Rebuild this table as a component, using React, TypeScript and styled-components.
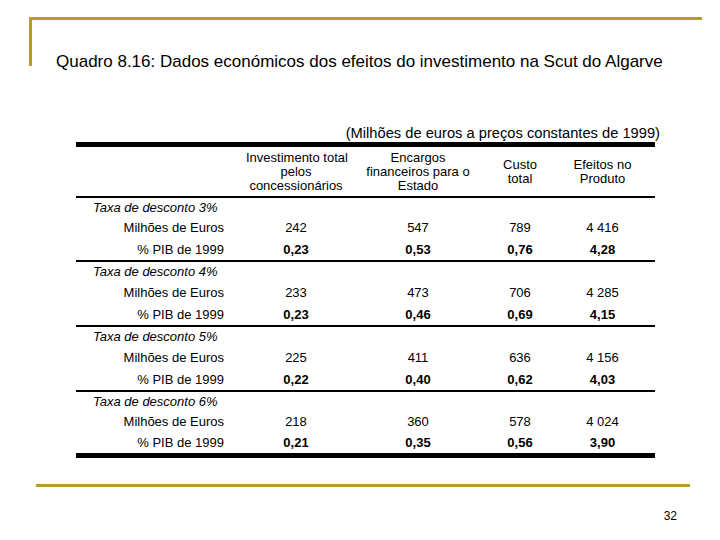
import React from 'react'
import styled, { createGlobalStyle } from 'styled-components'

const GOLD = '#b99a2e'
const COLS = '170px 100px 144px 60px 105px'

const GlobalStyle = createGlobalStyle`
  html, body {
    margin: 0;
    padding: 0;
    background: #fff;
  }
  body {
    font-family: 'Liberation Sans', Arial, sans-serif;
    color: #000;
  }
`

const Page = styled.div`
  width: 720px;
  height: 540px;
  padding-top: 17px;
  box-sizing: border-box;
  overflow: hidden;
`

const Frame = styled.div`
  margin-left: 29px;
  width: 646px;
  height: 14px;
  border-top: 3px solid ${GOLD};
  border-left: 3px solid ${GOLD};
  padding: 32px 0 0 24px;
`

const Title = styled.h1`
  margin: 0;
  font-size: 17px;
  font-weight: normal;
  line-height: 20px;
  white-space: nowrap;
`

const TableBlock = styled.div`
  margin: 59px 0 0 76px;
  width: 579px;
`

const Caption = styled.div`
  text-align: right;
  margin-right: -5px;
  font-size: 14.7px;
  line-height: 17px;
  white-space: nowrap;
`

const Rule = styled.div<{ $thick?: boolean }>`
  height: ${({ $thick }) => ($thick ? 5 : 2)}px;
  background: #000;
`

const Row = styled.div<{ $height: number }>`
  display: grid;
  grid-template-columns: ${COLS};
  height: ${({ $height }) => $height}px;
  align-items: center;
  font-size: 13px;
  line-height: 14px;
`

const HeadCell = styled.div`
  text-align: center;
  white-space: nowrap;
`

const GroupLabel = styled.div`
  grid-column: 1 / span 2;
  padding-left: 17px;
  font-style: italic;
`

const RowLabel = styled.div`
  text-align: right;
  padding-right: 22px;
`

const Value = styled.div<{ $bold?: boolean }>`
  text-align: center;
  font-weight: ${({ $bold }) => ($bold ? 'bold' : 'normal')};
`

const BottomLine = styled.div`
  margin: 26px 0 0 36px;
  width: 654px;
  height: 3px;
  background: ${GOLD};
`

const PageNumber = styled.div`
  margin: 22px 43px 0 0;
  text-align: right;
  font-size: 12px;
  line-height: 14px;
`

const headers = [
  ['Investimento total', 'pelos', 'concessionários'],
  ['Encargos', 'financeiros para o', 'Estado'],
  ['Custo', 'total'],
  ['Efeitos no', 'Produto'],
]

const groups = [
  { rate: '3%', euros: ['242', '547', '789', '4 416'], pib: ['0,23', '0,53', '0,76', '4,28'] },
  { rate: '4%', euros: ['233', '473', '706', '4 285'], pib: ['0,23', '0,46', '0,69', '4,15'] },
  { rate: '5%', euros: ['225', '411', '636', '4 156'], pib: ['0,22', '0,40', '0,62', '4,03'] },
  { rate: '6%', euros: ['218', '360', '578', '4 024'], pib: ['0,21', '0,35', '0,56', '3,90'] },
]

export default function App() {
  const last = groups.length - 1
  return (
    <>
      <GlobalStyle />
      <Page>
        <Frame>
          <Title>Quadro 8.16: Dados económicos dos efeitos do investimento na Scut do Algarve</Title>
        </Frame>

        <TableBlock>
          <Caption>(Milhões de euros a preços constantes de 1999)</Caption>
          <Rule $thick />
          <Row $height={49}>
            <div />
            {headers.map((lines, i) => (
              <HeadCell key={i}>
                {lines.map((l) => (
                  <div key={l}>{l}</div>
                ))}
              </HeadCell>
            ))}
          </Row>
          <Rule />
          {groups.map((g, i) => (
            <React.Fragment key={g.rate}>
              <Row $height={i === 0 || i === last ? 19 : 20}>
                <GroupLabel>Taxa de desconto {g.rate}</GroupLabel>
              </Row>
              <Row $height={22}>
                <RowLabel>Milhões de Euros</RowLabel>
                {g.euros.map((v, j) => (
                  <Value key={j}>{v}</Value>
                ))}
              </Row>
              <Row $height={i === last ? 20 : 21}>
                <RowLabel>% PIB de 1999</RowLabel>
                {g.pib.map((v, j) => (
                  <Value key={j} $bold>
                    {v}
                  </Value>
                ))}
              </Row>
              <Rule $thick={i === last} />
            </React.Fragment>
          ))}
        </TableBlock>

        <BottomLine />
        <PageNumber>32</PageNumber>
      </Page>
    </>
  )
}
